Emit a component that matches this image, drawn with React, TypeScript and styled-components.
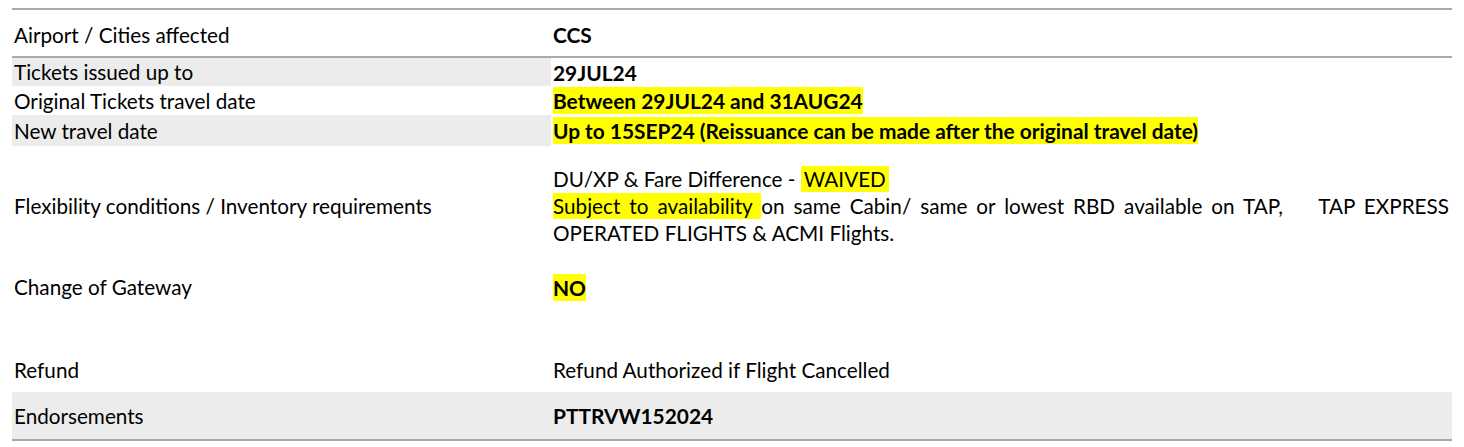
import React from "react";
import styled, { createGlobalStyle } from "styled-components";

const GlobalStyle = createGlobalStyle`
  html, body {
    margin: 0;
    padding: 0;
    background: #ffffff;
  }
  body {
    font-family: Lato, "Open Sans", "Liberation Sans", sans-serif;
    color: #000000;
  }
`;

const Page = styled.div`
  padding: 8px 12px 0 12px;
  width: 1440px;
`;

const Table = styled.div`
  border-top: 2px solid #a9a9a9;
  border-bottom: 2px solid #a9a9a9;
  display: flex;
  flex-direction: column;
`;

const Row = styled.div<{ $h: number; $shade?: "left" | "full"; $rule?: boolean; $pt?: number }>`
  display: grid;
  grid-template-columns: 539px 1fr;
  box-sizing: border-box;
  height: ${(p) => p.$h}px;
  padding-top: ${(p) => p.$pt ?? 0}px;
  background: ${(p) => (p.$shade === "full" ? "#ececec" : "transparent")};
  border-bottom: ${(p) => (p.$rule ? "2px solid #a9a9a9" : "none")};
`;

const Label = styled.div<{ $shade?: boolean }>`
  display: flex;
  align-items: center;
  padding-left: 2px;
  font-size: 20.7px;
  background: ${(p) => (p.$shade ? "#ececec" : "transparent")};
  white-space: nowrap;
`;

const Value = styled.div<{ $bold?: boolean }>`
  display: flex;
  align-items: center;
  padding-left: 2px;
  font-size: ${(p) => (p.$bold ? "20.9px" : "20.7px")};
  font-weight: ${(p) => (p.$bold ? 700 : 400)};
  white-space: nowrap;
`;

const Mark = styled.span<{ $pad?: number }>`
  background: #ffff00;
  padding: 1px ${(p) => p.$pad ?? 0}px 1px ${(p) => p.$pad ?? 0}px;
`;

const Block = styled.div`
  font-size: 20.7px;
  line-height: 27px;
  width: 896px;
`;

const Para = styled.p`
  margin: 0;
  text-align: justify;
  white-space: normal;
`;

const App: React.FC = () => {
  return (
    <Page>
      <GlobalStyle />
      <Table>
        <Row $h={48} $rule $pt={3}>
          <Label>Airport / Cities affected</Label>
          <Value $bold>CCS</Value>
        </Row>
        <Row $h={28}>
          <Label $shade>Tickets issued up to</Label>
          <Value $bold>29JUL24</Value>
        </Row>
        <Row $h={29}>
          <Label>Original Tickets travel date</Label>
          <Value $bold>
            <Mark>Between 29JUL24 and 31AUG24</Mark>
          </Value>
        </Row>
        <Row $h={31}>
          <Label $shade>New travel date</Label>
          <Value $bold>
            <Mark>Up to 15SEP24 (Reissuance can be made after the original travel date)</Mark>
          </Value>
        </Row>
        <Row $h={120}>
          <Label>Flexibility conditions / Inventory requirements</Label>
          <Value>
            <Block>
              <div>
                DU/XP &amp; Fare Difference - <Mark $pad={3}>WAIVED</Mark>
              </div>
              <Para>
                <Mark>Subject to availability </Mark>on same Cabin/ same or lowest RBD available on
                TAP,&nbsp;&nbsp;&nbsp; TAP EXPRESS OPERATED FLIGHTS &amp; ACMI Flights.
              </Para>
            </Block>
          </Value>
        </Row>
        <Row $h={42}>
          <Label>Change of Gateway</Label>
          <Value $bold>
            <Mark>NO</Mark>
          </Value>
        </Row>
        <Row $h={40}>
          <Label />
          <Value />
        </Row>
        <Row $h={44}>
          <Label>Refund</Label>
          <Value>Refund Authorized if Flight Cancelled</Value>
        </Row>
        <Row $h={47} $shade="full">
          <Label>Endorsements</Label>
          <Value $bold>PTTRVW152024</Value>
        </Row>
      </Table>
    </Page>
  );
};

export default App;
